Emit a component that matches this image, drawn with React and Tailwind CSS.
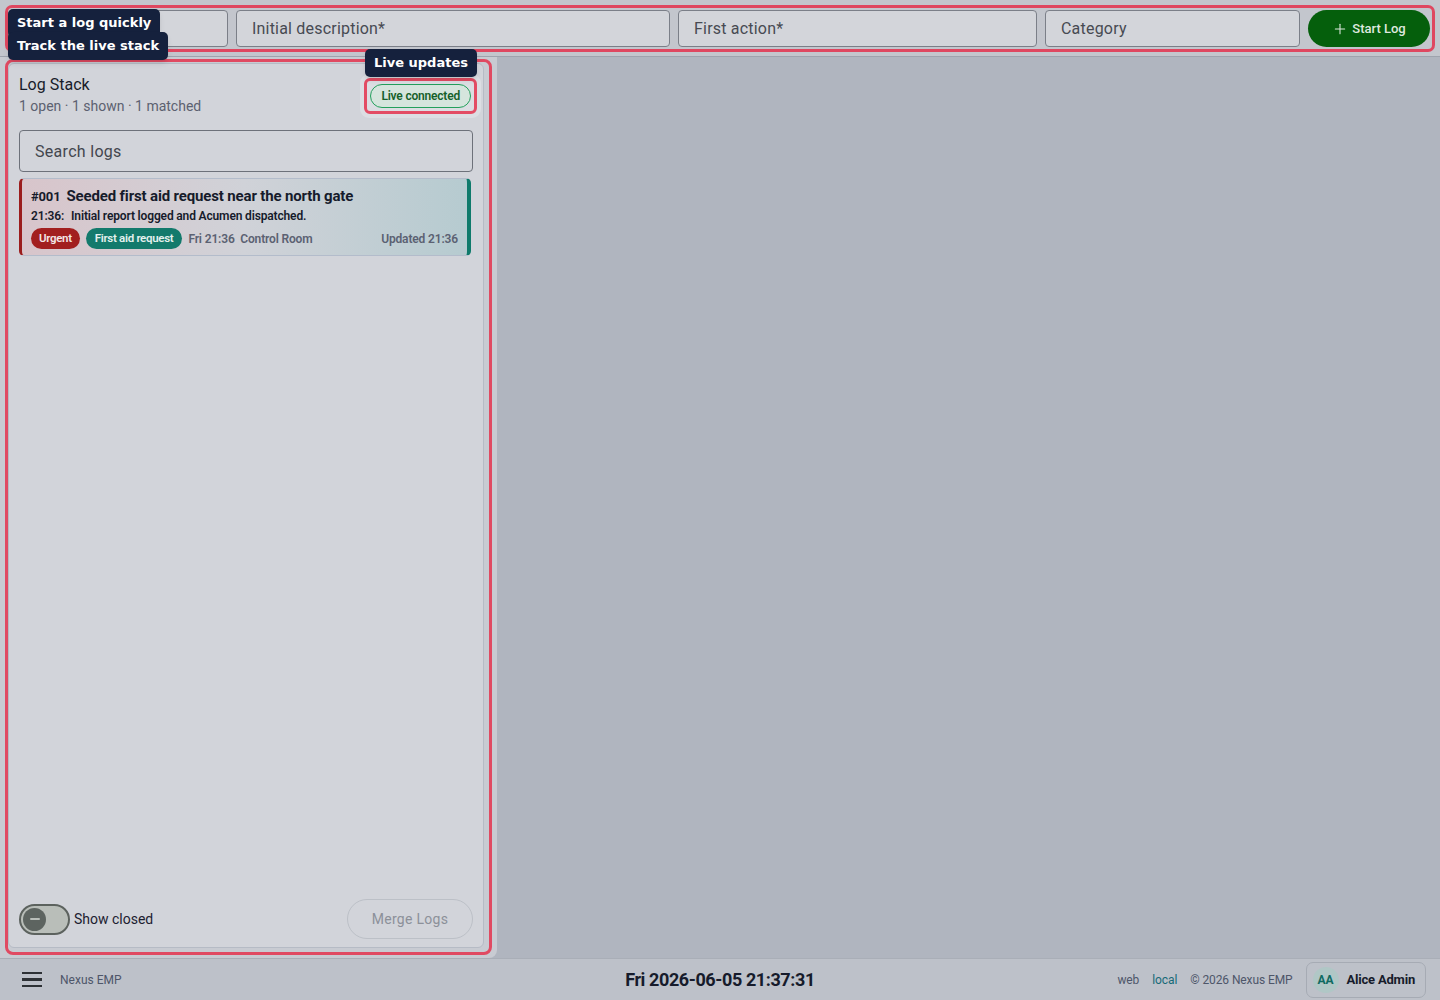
import { Plus } from "lucide-react";

const inputCls =
  "h-[37px] shrink-0 rounded-[4px] border border-[#7b7f88] bg-[#d3d5da] px-[15px] text-[16px] text-[#3f434b] placeholder:text-[#474a52] outline-none tracking-[0.2px]";

const Tip = ({ className, children }) => (
  <div
    className={
      "absolute z-20 rounded-[5px] bg-[#15213d] px-[9px] py-[4px] text-[13px] font-bold text-white shadow-md " +
      className
    }
    style={{ fontFamily: '"DejaVu Sans", sans-serif' }}
  >
    {children}
  </div>
);

const LogCard = () => (
  <div className="mt-[6px] mr-[2px] rounded-[5px] border-l-[3px] border-r-[4px] border-y border-l-[#9b1d1d] border-r-[#0f7a6b] border-y-[#b3bccb] bg-gradient-to-r from-[#d8c5cb] via-[#d0d2d8] to-[#b6cbd0] px-[9px] pt-[6px] pb-[6px] tracking-[-0.15px] text-[#161b2b]">
    <div className="flex items-baseline gap-[6px] leading-[22px]">
      <span className="text-[13px] font-bold">#001</span>
      <span className="text-[15px] font-bold">Seeded first aid request near the north gate</span>
    </div>
    <div className="flex gap-[7px] text-[12px] font-semibold leading-[17px]">
      <span>21:36:</span>
      <span>Initial report logged and Acumen dispatched.</span>
    </div>
    <div className="mt-[3px] flex items-center text-[12px] font-semibold">
      <span className="rounded-full bg-[#a21f1f] px-[8px] py-[2px] text-[11.5px] tracking-[-0.3px] text-[#f3e6e6]">Urgent</span>
      <span className="ml-[6px] rounded-full bg-[#137a6c] px-[9px] py-[2px] text-[11.5px] tracking-[-0.3px] text-[#e4f1ee]">First aid request</span>
      <span className="ml-[6px] text-[#5b6172]">Fri 21:36&nbsp;&nbsp;Control Room</span>
      <span className="ml-auto text-[#5b6172]">Updated 21:36</span>
    </div>
  </div>
);

const App = () => {
  return (
    <div
      className="relative flex h-[1000px] w-[1440px] flex-col overflow-hidden bg-[#b0b5bf]"
      style={{ fontFamily: "Roboto, sans-serif" }}
    >
      {/* top quick-start bar */}
      <div className="h-[57px] shrink-0 border-b border-[#9ea3ad] bg-[#c3c6cd] px-[5px] pt-[5px]">
        <div className="flex gap-2 rounded-[7px] border-[3px] border-[#df4760] py-[2px] pl-0 pr-[2px]">
          <input className={inputCls + " w-[220px]"} placeholder="" />
          <input className={inputCls + " w-[434px]"} placeholder="Initial description*" />
          <input className={inputCls + " w-[359px]"} placeholder="First action*" />
          <input className={inputCls + " w-[255px]"} placeholder="Category" />
          <button className="flex h-[37px] flex-1 items-center justify-center gap-[4px] rounded-full bg-[#055f0c] text-[13px] font-medium text-[#dfe9df]">
            <Plus size={16} strokeWidth={1.6} />
            Start Log
          </button>
        </div>
      </div>

      <div className="flex min-h-0 flex-1">
        {/* left stack panel */}
        <div className="w-[497px] shrink-0 rounded-br-[8px] bg-[#c8cbd2] pl-[5px] pr-[5px] pt-[2px] pb-[3px]">
          <div className="flex h-full flex-col rounded-[8px] border-[3px] border-[#e04a62] pl-0 pt-px pr-[5px] pb-[4px]">
            <div className="flex flex-1 flex-col rounded-[6px] border border-[#b6bbc5] bg-[#d2d4da] px-[10px] pt-[10px] pb-[8px]">
              <div className="relative flex items-start justify-between">
                <div>
                  <div className="text-[16px] leading-[22px] text-[#181c2a]">Log Stack</div>
                  <div className="text-[14px] leading-[20px] text-[#5c6170]">1 open · 1 shown · 1 matched</div>
                </div>
                <div className="mb-[-4px] mr-[-8px] mt-0 rounded-[9px] bg-[#dcdee3] p-[4px]">
                  <div className="rounded-[6px] border-[3px] border-[#e34c64] px-[3px] py-[3px]">
                    <div className="rounded-full border border-[#23a05c] bg-[#d5e5dd] px-[10px] py-[4px] text-[12px] font-semibold leading-[14px] tracking-[-0.2px] text-[#15602a]">
                      Live connected
                    </div>
                  </div>
                </div>
              </div>

              <input
                className="mt-[14px] h-[42px] w-full rounded-[4px] border border-[#6d717a] bg-transparent px-[15px] text-[16px] tracking-[0.3px] text-[#3f434b] placeholder:text-[#43464e] outline-none"
                placeholder="Search logs"
              />

              <LogCard />

              <div className="flex-1" />

              <div className="flex items-center justify-between">
                <div className="flex items-center gap-[4px]">
                  <div className="flex h-[31px] w-[51px] items-center rounded-full border-2 border-[#5c625e] bg-[#b9beb9] pl-[2px]">
                    <div className="flex h-[23px] w-[23px] items-center justify-center rounded-full bg-[#5d6460]">
                      <div className="h-[2px] w-[10px] rounded bg-[#b9beb9]" />
                    </div>
                  </div>
                  <span className="text-[14px] text-[#1c2030]">Show closed</span>
                </div>
                <button className="h-[40px] w-[126px] rounded-full border border-[#bcc0c7] text-[14px] tracking-[0.3px] text-[#8c9099]">
                  Merge Logs
                </button>
              </div>
            </div>
          </div>
        </div>
        <div className="flex-1" />
      </div>

      {/* footer */}
      <div className="grid h-[42px] shrink-0 grid-cols-[1fr_auto_1fr] items-center border-t border-[#a9aeb7] bg-[#bdc1c9] px-[14px]">
        <div className="flex items-center pl-[8px]">
          <div className="flex w-[20px] flex-col gap-[4px]">
            <div className="h-[2.5px] bg-[#2d3135]" />
            <div className="h-[2.5px] bg-[#2d3135]" />
            <div className="h-[2.5px] bg-[#2d3135]" />
          </div>
          <span className="ml-[18px] text-[12px] text-[#4e5669]">Nexus EMP</span>
        </div>
        <span className="text-[18px] font-bold tracking-[-0.4px] text-[#161b2b]">
          Fri 2026-06-05 21:37:31
        </span>
        <div className="flex items-center justify-end gap-[13px] text-[12px] tracking-[-0.1px] text-[#4e5669]">
          <span>web</span>
          <span className="text-[#176a78]">local</span>
          <span>© 2026 Nexus EMP</span>
          <div className="flex h-[36px] items-center gap-[8px] rounded-[7px] border border-[#a6abb4] pl-[6px] pr-[10px]">
            <div className="flex h-[26px] w-[26px] items-center justify-center rounded-full bg-[#b0c7c6] text-[12px] font-bold text-[#0f6a61]">
              AA
            </div>
            <span className="text-[13px] font-bold tracking-[-0.2px] text-[#161b2b]">Alice Admin</span>
          </div>
        </div>
      </div>

      {/* tooltips */}
      <Tip className="left-[8px] top-[9px]">Start a log quickly</Tip>
      <Tip className="left-[8px] top-[32px]">Track the live stack</Tip>
      <Tip className="left-[365px] top-[49px]">Live updates</Tip>
    </div>
  );
};

export default App;
